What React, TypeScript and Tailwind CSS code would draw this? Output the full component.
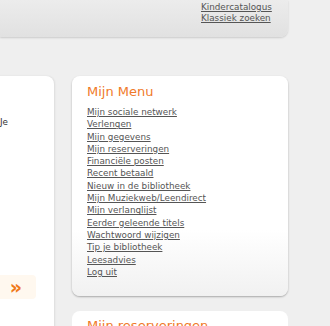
import React from "react";

const menu = [
  "Mijn sociale netwerk",
  "Verlengen",
  "Mijn gegevens",
  "Mijn reserveringen",
  "Financiële posten",
  "Recent betaald",
  "Nieuw in de bibliotheek",
  "Mijn Muziekweb/Leendirect",
  "Mijn verlanglijst",
  "Eerder geleende titels",
  "Wachtwoord wijzigen",
  "Tip je bibliotheek",
  "Leesadvies",
  "Log uit",
];

export default function App() {
  return (
    <div className="w-[330px] h-[326px] overflow-hidden bg-[#efefef] font-['DejaVu_Sans',Verdana,sans-serif]">
      {/* top bar */}
      <div className="w-[288px] h-[37px] rounded-br-[8px] bg-gradient-to-b from-[#ececec] to-[#e1e1e1] shadow-[0_1px_2px_rgba(0,0,0,0.15)] flex flex-col items-start pl-[201px] pt-[2px]">
        <a className="text-[8.8px] leading-[11px] text-[#555] underline">Kindercatalogus</a>
        <a className="text-[8.8px] leading-[11px] text-[#555] underline">Klassiek zoeken</a>
      </div>

      <div className="flex gap-[18px] mt-[39px]">
        {/* left card (cut off) */}
        <div className="w-[64px] h-[260px] -ml-[10px] bg-white rounded-tr-[8px] shadow-[1px_0_2px_rgba(0,0,0,0.08)] flex flex-col pt-[40px] pl-[10px]">
          <span className="text-[8.8px] text-[#333]">Je</span>
          <div className="mt-[146px] w-[40px] h-[24px] -ml-[4px] rounded bg-[#fff8ef] flex items-center justify-center text-[19px] leading-none font-bold text-[#f07a1a]">»</div>
        </div>

        <div className="flex flex-col gap-[15px]">
          {/* Mijn Menu */}
          <div className="w-[216px] h-[220px] rounded-[8px] bg-gradient-to-b from-white from-70% to-[#f1f1f1] shadow-[0_1px_2px_rgba(0,0,0,0.3)] pl-[15px] pt-[7px]">
            <h2 className="text-[13px] leading-[18px] text-[#f07a2a] font-normal">Mijn Menu</h2>
            <ul className="mt-[5px]">
              {menu.map((m) => (
                <li key={m} className="text-[8.8px] leading-[12.3px] text-[#555]">
                  <a className="underline">{m}</a>
                </li>
              ))}
            </ul>
          </div>

          {/* Mijn reserveringen */}
          <div className="w-[216px] h-[60px] rounded-[8px] bg-white pl-[15px] pt-[6px]">
            <h2 className="text-[13px] leading-[18px] text-[#f07a2a] font-normal">Mijn reserveringen</h2>
          </div>
        </div>
      </div>
    </div>
  );
}
